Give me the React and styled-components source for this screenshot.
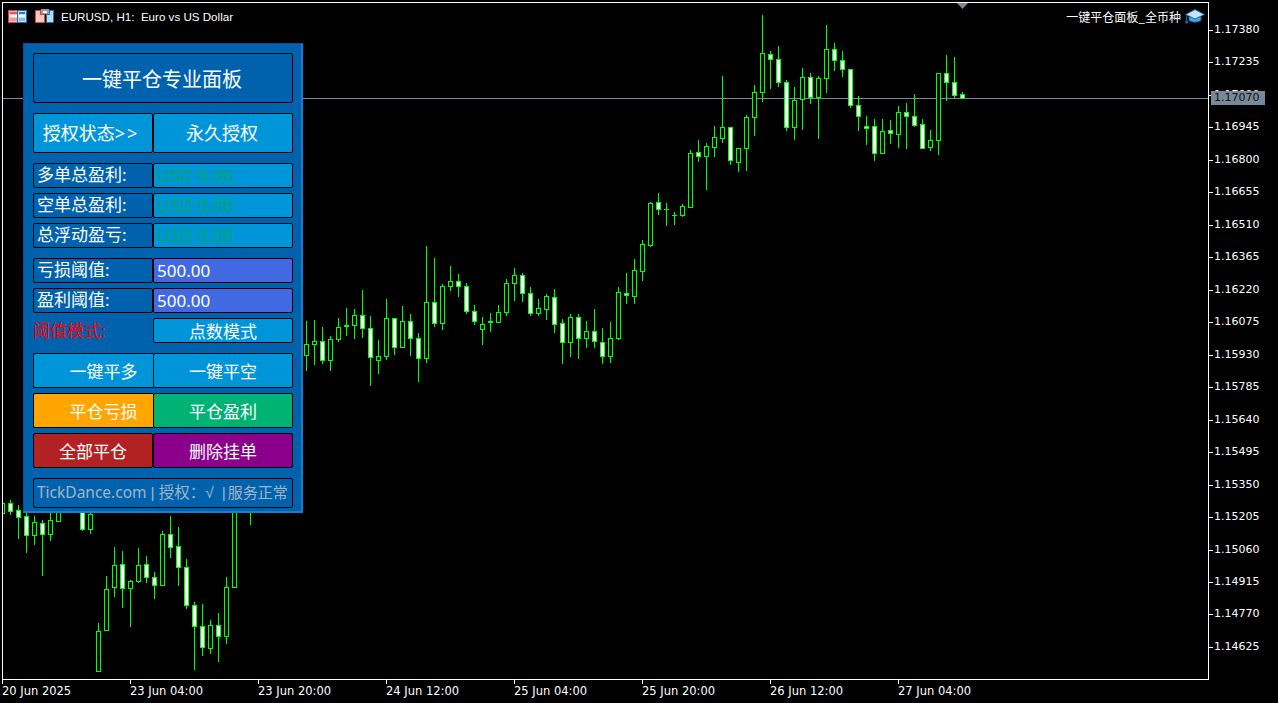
import React from 'react'
import styled, { createGlobalStyle } from 'styled-components'

const GlobalStyle = createGlobalStyle`
  html, body { margin: 0; padding: 0; background: #000; }
  * { box-sizing: border-box; }
`

// x, wick high, wick low, body top, body bottom, white body
const velas = [
  [2, 500, 513, 503, 513, 0], [10, 500, 514, 503, 511, 1], [18, 505, 538, 510, 517, 1], [26, 512, 552, 516, 535, 1],
  [34, 516, 544, 522, 535, 0], [42, 520, 575, 523, 534, 1], [50, 513, 540, 520, 534, 0], [58, 505, 521, 505, 521, 0],
  [82, 505, 530, 505, 529, 1], [90, 513, 533, 514, 529, 0], [98, 623, 671, 631, 671, 0], [106, 576, 630, 589, 630, 0],
  [114, 547, 596, 565, 587, 0], [122, 551, 607, 564, 588, 1], [130, 580, 626, 581, 588, 0], [138, 548, 582, 565, 581, 0],
  [146, 556, 582, 564, 577, 1], [154, 572, 598, 577, 585, 1], [162, 531, 585, 534, 585, 0], [170, 516, 557, 534, 547, 1],
  [178, 527, 585, 546, 567, 1], [186, 559, 608, 567, 605, 1], [194, 602, 669, 605, 626, 1], [202, 604, 655, 626, 647, 1],
  [210, 620, 653, 625, 648, 0], [218, 613, 661, 625, 636, 1], [226, 577, 643, 587, 636, 0], [234, 500, 587, 500, 587, 0],
  [250, 505, 524, 505, 510, 0],
  [306, 321, 370, 344, 355, 0], [314, 320, 364, 341, 344, 0], [322, 327, 363, 341, 360, 1], [330, 336, 370, 339, 360, 0],
  [338, 318, 341, 327, 339, 0], [346, 308, 335, 325, 326, 0], [354, 309, 338, 315, 325, 0], [362, 290, 337, 315, 328, 1],
  [370, 316, 385, 328, 357, 1], [378, 340, 373, 356, 360, 0], [386, 299, 359, 318, 356, 0], [394, 318, 354, 318, 347, 1],
  [402, 306, 347, 321, 347, 0], [410, 314, 355, 321, 338, 1], [418, 333, 381, 338, 358, 1], [426, 246, 362, 302, 358, 0],
  [434, 258, 326, 302, 323, 1], [442, 284, 329, 286, 323, 0], [450, 266, 290, 281, 286, 0], [458, 274, 296, 281, 286, 1],
  [466, 283, 313, 286, 311, 1], [474, 305, 324, 311, 321, 1], [482, 317, 344, 324, 329, 0], [490, 313, 331, 321, 322, 0],
  [498, 305, 322, 312, 322, 0], [506, 279, 315, 283, 312, 0], [514, 268, 300, 275, 283, 0], [522, 273, 301, 275, 293, 1],
  [530, 287, 315, 293, 313, 1], [538, 299, 315, 308, 313, 0], [546, 294, 319, 296, 309, 0], [554, 289, 332, 297, 324, 1],
  [562, 319, 363, 323, 342, 1], [570, 314, 356, 317, 342, 0], [578, 314, 358, 317, 338, 1], [586, 321, 347, 331, 338, 0],
  [594, 309, 347, 331, 341, 1], [602, 328, 363, 342, 356, 1], [610, 322, 362, 338, 356, 0], [618, 287, 339, 292, 338, 0],
  [626, 273, 303, 293, 295, 1], [634, 259, 303, 270, 296, 0], [642, 240, 280, 244, 271, 0], [650, 202, 246, 203, 245, 0],
  [658, 193, 214, 202, 209, 1], [666, 203, 225, 209, 209, 0], [674, 212, 224, 215, 215, 0], [682, 204, 216, 206, 215, 0],
  [690, 150, 207, 153, 207, 0], [698, 140, 161, 152, 156, 1], [706, 143, 189, 146, 156, 0], [714, 126, 156, 137, 147, 0],
  [722, 76, 142, 127, 138, 0], [730, 127, 164, 127, 160, 1], [738, 148, 171, 148, 162, 0], [746, 115, 170, 117, 148, 0],
  [754, 85, 135, 92, 117, 0], [762, 15, 101, 53, 92, 0], [770, 51, 88, 54, 59, 1], [778, 46, 86, 59, 82, 1],
  [786, 80, 130, 82, 127, 1], [794, 87, 139, 100, 127, 0], [802, 68, 129, 77, 99, 0], [810, 73, 103, 77, 97, 1],
  [818, 76, 138, 78, 97, 0], [826, 25, 92, 49, 78, 0], [834, 43, 70, 49, 60, 1], [842, 51, 76, 60, 69, 1],
  [850, 69, 107, 69, 105, 1], [858, 96, 130, 105, 116, 1], [866, 116, 144, 126, 128, 1], [874, 119, 160, 126, 153, 1],
  [882, 119, 153, 131, 153, 0], [890, 120, 143, 130, 133, 1], [898, 106, 147, 112, 134, 0], [906, 103, 148, 112, 116, 1],
  [914, 94, 126, 116, 125, 1], [922, 119, 148, 124, 148, 1], [930, 130, 150, 140, 147, 0], [938, 73, 154, 73, 140, 0],
  [946, 55, 100, 73, 82, 1], [954, 57, 97, 82, 95, 1], [962, 92, 98, 94, 98, 1],
]

const precios = ['1.17380', '1.17235', '1.17090', '1.16945', '1.16800', '1.16655', '1.16510', '1.16365', '1.16220', '1.16075',
  '1.15930', '1.15785', '1.15640', '1.15495', '1.15350', '1.15205', '1.15060', '1.14915', '1.14770', '1.14625']

const fechas = ['20 Jun 2025', '23 Jun 04:00', '23 Jun 20:00', '24 Jun 12:00', '25 Jun 04:00', '25 Jun 20:00', '26 Jun 12:00', '27 Jun 04:00']

function Velas() {
  return (
    <ChartSvg viewBox="3 3 1205 676" shapeRendering="crispEdges">
      <rect x="3" y="98" width="1205" height="1" fill="#778899" />
      <polygon points="957,3 968,3 962.5,9" fill="#778899" shapeRendering="auto" />
      {velas.map(([x, alto, bajo, top, bot, llena]) => (
        <g key={x}>
          <rect x={x} y={alto} width="1" height={bajo - alto + 1} fill="#00ff00" />
          <rect x={x - 2} y={top} width="5" height={bot - top + 1} fill="#00ff00" />
          {bot - top >= 2 && (
            <rect x={x - 1} y={top + 1} width="3" height={bot - top - 1} fill={llena ? '#fff' : '#000'} />
          )}
        </g>
      ))}
    </ChartSvg>
  )
}

function IconoTabla() {
  return (
    <svg width="20" height="14" viewBox="0 0 20 14" shapeRendering="crispEdges">
      <rect x="0.5" y="0.5" width="9" height="12" fill="#f8c0b8" stroke="#d8433c" />
      <rect x="2" y="2" width="7" height="2" fill="#e8574f" />
      <rect x="2" y="5" width="7" height="2" fill="#fff" />
      <rect x="2" y="8" width="7" height="3" fill="#f39a90" />
      <rect x="9.5" y="0.5" width="9" height="12" fill="#bfe0f5" stroke="#1c6fb5" />
      <rect x="11" y="2" width="6" height="2" fill="#1c84d0" />
      <rect x="11" y="5" width="6" height="2" fill="#fff" />
      <rect x="11" y="8" width="6" height="3" fill="#7cc0ec" />
    </svg>
  )
}

function IconoVentanas() {
  return (
    <svg width="20" height="15" viewBox="0 0 20 15" shapeRendering="crispEdges">
      <path d="M0.5 1.5H5.5V5.5H9.5V13.5H0.5Z" fill="#fbc9c0" stroke="#d8433c" />
      <path d="M11.5 5.5H14.5V1.5H18.5V13.5H11.5Z" fill="#b5dcf5" stroke="#1c6fb5" />
      <rect x="6" y="0" width="8" height="5" fill="#9a9a9a" />
      <rect x="8" y="2" width="4" height="2" fill="#fff" />
    </svg>
  )
}

function IconoBirrete() {
  return (
    <svg width="20" height="16" viewBox="0 0 20 16">
      <path d="M4 7.5V11.5Q10 15 16 11.5V7.5Z" fill="#4ea6e0" stroke="#13609f" />
      <path d="M10 0.5L19.5 5.5L10 10L0.5 5.5Z" fill="#bfe6fa" stroke="#13609f" />
      <path d="M1.5 5.5V12" stroke="#13609f" strokeWidth="1.2" />
      <circle cx="1.7" cy="13" r="1.7" fill="#13609f" />
    </svg>
  )
}

export default function App() {
  return (
    <Pantalla>
      <GlobalStyle />
      <Grafico>
        <Velas />
        <Cabecera>
          <IconosIzq>
            <IconoTabla />
            <IconoVentanas />
          </IconosIzq>
          <Simbolo>EURUSD, H1:&nbsp; Euro vs US Dollar</Simbolo>
          <NombreEA>一键平仓面板_全币种</NombreEA>
          <IconoBirrete />
        </Cabecera>
      </Grafico>

      <EjePrecios>
        {precios.map((p) => (
          <Precio key={p}>{p}</Precio>
        ))}
        <PrecioActual>1.17070</PrecioActual>
      </EjePrecios>

      <EjeFechas>
        {fechas.map((f) => (
          <Fecha key={f}>{f}</Fecha>
        ))}
      </EjeFechas>

      <Panel>
        <Titulo>一键平仓专业面板</Titulo>

        <Fila $alto={40}>
          <Boton $fondo="#0095d9" $size={18}>授权状态<Flecha>&gt;&gt;</Flecha></Boton>
          <Boton $fondo="#0095d9" $size={18}>永久授权</Boton>
        </Fila>

        <Grupo>
          <Fila $alto={25}>
            <Etiqueta>多单总盈利:</Etiqueta>
            <Valor $fondo="#0095d9" $color="#00a56b" $size={18}>USD 0.00</Valor>
          </Fila>
          <Fila $alto={25}>
            <Etiqueta>空单总盈利:</Etiqueta>
            <Valor $fondo="#0095d9" $color="#00a56b" $size={18}>USD 0.00</Valor>
          </Fila>
          <Fila $alto={25}>
            <Etiqueta>总浮动盈亏:</Etiqueta>
            <Valor $fondo="#0095d9" $color="#00a56b" $size={18}>USD 0.00</Valor>
          </Fila>
        </Grupo>

        <Grupo>
          <Fila $alto={25}>
            <Etiqueta>亏损阈值:</Etiqueta>
            <Valor $fondo="#4169e1" $color="#fff">500.00</Valor>
          </Fila>
          <Fila $alto={25}>
            <Etiqueta>盈利阈值:</Etiqueta>
            <Valor $fondo="#4169e1" $color="#fff">500.00</Valor>
          </Fila>
          <Fila $alto={25}>
            <Aviso>阈值模式:</Aviso>
            <Boton $fondo="#0095d9">点数模式</Boton>
          </Fila>
        </Grupo>

        <Grupo>
          <Fila $alto={35}>
            <Boton $fondo="#0095d9" $solapado>一键平多</Boton>
            <Boton $fondo="#0095d9">一键平空</Boton>
          </Fila>
          <Fila $alto={35}>
            <Boton $fondo="#ffa500" $solapado>平仓亏损</Boton>
            <Boton $fondo="#00b374">平仓盈利</Boton>
          </Fila>
          <Fila $alto={35}>
            <Boton $fondo="#b22222">全部平仓</Boton>
            <Boton $fondo="#8b008b">删除挂单</Boton>
          </Fila>
        </Grupo>

        <Pie>TickDance.com <Raya>|</Raya> 授权：<Raya>√</Raya> <Raya $izq={4}>|</Raya><Servicio>服务正常</Servicio></Pie>
      </Panel>
    </Pantalla>
  )
}

const Pantalla = styled.div`
  position: relative;
  width: 1278px;
  height: 703px;
  padding: 2px 0 0 2px;
  background: #000;
  overflow: hidden;
  display: grid;
  grid-template-columns: 1207px 69px;
  grid-template-rows: 678px 1fr;
  font-family: "DejaVu Sans", sans-serif;
  color: #fff;
`

const Grafico = styled.div`
  position: relative;
  border: 1px solid #fff;
`

const ChartSvg = styled.svg`
  display: block;
  width: 1205px;
  height: 676px;
`

const Cabecera = styled.div`
  position: absolute;
  top: 5px;
  left: 5px;
  right: 3px;
  display: flex;
  align-items: center;
  height: 17px;
`

const IconosIzq = styled.div`
  display: flex;
  gap: 7px;
  align-items: center;
  margin-right: 6px;
`

const Simbolo = styled.span`
  font-family: "Liberation Sans", sans-serif;
  font-size: 11.6px;
  white-space: pre;
  flex: 1;
`

const NombreEA = styled.span`
  font-family: "Noto Sans CJK SC", sans-serif;
  font-size: 12px;
  margin-right: 4px;
`

const EjePrecios = styled.div`
  position: relative;
  padding-top: 12px;
`

const Precio = styled.div`
  position: relative;
  height: 32.47px;
  line-height: 32px;
  padding-left: 5px;
  font-size: 11px;
  &::before {
    content: '';
    position: absolute;
    left: 0;
    top: 16px;
    width: 4px;
    height: 1px;
    background: #fff;
  }
`

const PrecioActual = styled.div`
  position: absolute;
  top: 89px;
  left: 2px;
  width: 54px;
  height: 14px;
  padding-left: 3px;
  background: #778899;
  color: #111;
  font-size: 11px;
  line-height: 14px;
`

const EjeFechas = styled.div`
  grid-column: 1 / 3;
  display: flex;
`

const Fecha = styled.div`
  position: relative;
  width: 128px;
  padding-top: 4px;
  font-size: 11.5px;
  line-height: 14px;
  white-space: nowrap;
  &::before {
    content: '';
    position: absolute;
    left: 0;
    top: 0;
    width: 1px;
    height: 4px;
    background: #fff;
  }
`

const Panel = styled.div`
  position: absolute;
  left: 23px;
  top: 43px;
  width: 280px;
  height: 470px;
  padding: 9px 8px 0 9px;
  background: #0062ad;
  border-style: solid;
  border-width: 1px 2px 2px 1px;
  border-color: #0b4f96 #1c7ad0 #1c7ad0 #0b4f96;
  display: flex;
  flex-direction: column;
  gap: 10px;
  font-family: "Noto Sans", "Noto Sans CJK SC", sans-serif;
`

const Grupo = styled.div`
  display: flex;
  flex-direction: column;
  gap: 5px;
`

const Fila = styled.div`
  display: grid;
  grid-template-columns: 120px 140px;
  grid-template-rows: ${(p) => p.$alto}px;
`

const Caja = styled.div`
  display: flex;
  align-items: center;
  border: 1px solid #000;
  border-radius: 2px;
  line-height: 1;
  white-space: pre;
`

const Titulo = styled(Caja)`
  height: 50px;
  padding: 4px 2px 0 0;
  justify-content: center;
  font-size: 20px;
`

const Boton = styled(Caja)`
  justify-content: center;
  background: ${(p) => p.$fondo};
  font-size: ${(p) => p.$size || 17}px;
  padding-bottom: ${(p) => (p.$size ? 1 : 0)}px;
  padding-top: ${(p) => (p.$size ? 0 : 2)}px;
  padding-left: ${(p) => (p.$solapado ? 20 : 0)}px;
  padding-right: ${(p) => (p.$size ? 2 : 0)}px;
  ${(p) => p.$solapado && 'border-right: 0; border-radius: 2px 0 0 2px;'}
`

const Flecha = styled.span`
  letter-spacing: 2px;
  margin-right: 2px;
`

const Etiqueta = styled(Caja)`
  padding: 0 0 2px 3px;
  font-size: 17px;
`

const Valor = styled(Caja)`
  padding: 0 0 ${(p) => (p.$size ? 2 : 0)}px 3px;
  background: ${(p) => p.$fondo};
  color: ${(p) => p.$color};
  font-size: ${(p) => p.$size || 17}px;
`

const Aviso = styled.div`
  display: flex;
  align-items: center;
  color: #ff0000;
  font-size: 17px;
  line-height: 1;
`

const Pie = styled(Caja)`
  display: block;
  height: 30px;
  padding-left: 3px;
  color: #a3b5c6;
  font-size: 15.5px;
  line-height: 27px;
`

const Raya = styled.span`
  font-family: "Liberation Sans", sans-serif;
  margin-left: ${(p) => p.$izq || 0}px;
`

const Servicio = styled.span`
  margin-left: 2px;
  font-size: 15px;
`
